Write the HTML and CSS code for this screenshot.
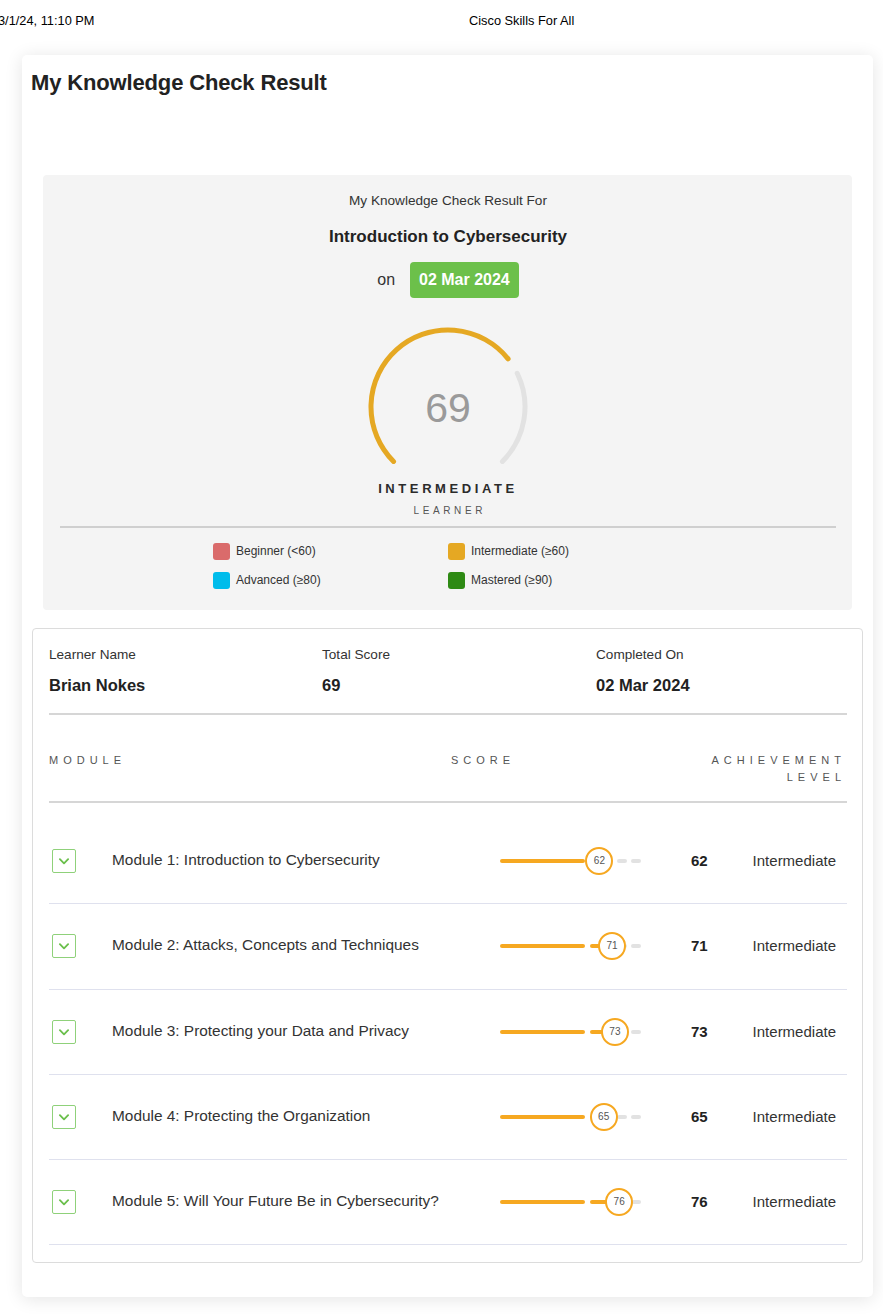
FILE: index.html
```html
<!DOCTYPE html>
<html lang="en">
<head>
<meta charset="utf-8">
<title>Cisco Skills For All</title>
<link rel="stylesheet" href="styles.css">
</head>
<body>
<header class="print-head">
  <span class="print-date">3/1/24, 11:10 PM</span>
  <span class="print-title">Cisco Skills For All</span>
</header>

<main class="card">
  <h1 class="page-title">My Knowledge Check Result</h1>

  <section class="summary">
    <p class="summary-for">My Knowledge Check Result For</p>
    <p class="summary-course">Introduction to Cybersecurity</p>
    <div class="summary-date">
      <span class="on">on</span>
      <span class="date-badge">02 Mar 2024</span>
    </div>
    <svg class="gauge" width="170" height="150" viewBox="0 0 170 150">
      <path d="M154.2 51.24 A77 77 0 0 1 139.45 139.45" fill="none" stroke="#e2e2e2" stroke-width="5" stroke-linecap="round"/>
      <path d="M30.55 139.45 A77 77 0 1 1 145.09 36.86" fill="none" stroke="#e5a823" stroke-width="5" stroke-linecap="round"/>
      <text x="85" y="86" text-anchor="middle" dominant-baseline="central" class="gauge-num">69</text>
    </svg>
    <p class="level">INTERMEDIATE</p>
    <p class="level-sub">LEARNER</p>
    <div class="legend">
      <div class="legend-item"><span class="sw sw-beg"></span>Beginner (&lt;60)</div>
      <div class="legend-item"><span class="sw sw-int"></span>Intermediate (≥60)</div>
      <div class="legend-item"><span class="sw sw-adv"></span>Advanced (≥80)</div>
      <div class="legend-item"><span class="sw sw-mas"></span>Mastered (≥90)</div>
    </div>
  </section>

  <section class="details">
    <div class="info">
      <div class="info-col">
        <div class="info-label">Learner Name</div>
        <div class="info-value">Brian Nokes</div>
      </div>
      <div class="info-col">
        <div class="info-label">Total Score</div>
        <div class="info-value">69</div>
      </div>
      <div class="info-col">
        <div class="info-label">Completed On</div>
        <div class="info-value">02 Mar 2024</div>
      </div>
    </div>

    <div class="thead">
      <span class="th th-module">MODULE</span>
      <span class="th th-score">SCORE</span>
      <span class="th th-level">ACHIEVEMENT LEVEL</span>
    </div>

    <div class="rows">
      <div class="row">
        <span class="chev"><svg width="24" height="24" viewBox="0 0 24 24"><path d="M7.5 10 L12 14.5 L16.5 10" fill="none" stroke="#6abf4b" stroke-width="2" stroke-linecap="round" stroke-linejoin="round"/></svg></span>
        <span class="mod-name">Module 1: Introduction to Cybersecurity</span>
        <span class="bar">
          <span class="seg s1" style="--f:100%"></span><span class="seg s2" style="--f:10%"></span><span class="seg s3" style="--f:0%"></span><span class="seg s4" style="--f:0%"></span>
          <span class="knob" style="left:calc(62% - 2px)">62</span>
        </span>
        <span class="score">62</span>
        <span class="lvl">Intermediate</span>
      </div>
      <div class="row">
        <span class="chev"><svg width="24" height="24" viewBox="0 0 24 24"><path d="M7.5 10 L12 14.5 L16.5 10" fill="none" stroke="#6abf4b" stroke-width="2" stroke-linecap="round" stroke-linejoin="round"/></svg></span>
        <span class="mod-name">Module 2: Attacks, Concepts and Techniques</span>
        <span class="bar">
          <span class="seg s1" style="--f:100%"></span><span class="seg s2" style="--f:55%"></span><span class="seg s3" style="--f:0%"></span><span class="seg s4" style="--f:0%"></span>
          <span class="knob" style="left:calc(71% - 2px)">71</span>
        </span>
        <span class="score">71</span>
        <span class="lvl">Intermediate</span>
      </div>
      <div class="row">
        <span class="chev"><svg width="24" height="24" viewBox="0 0 24 24"><path d="M7.5 10 L12 14.5 L16.5 10" fill="none" stroke="#6abf4b" stroke-width="2" stroke-linecap="round" stroke-linejoin="round"/></svg></span>
        <span class="mod-name">Module 3: Protecting your Data and Privacy</span>
        <span class="bar">
          <span class="seg s1" style="--f:100%"></span><span class="seg s2" style="--f:65%"></span><span class="seg s3" style="--f:0%"></span><span class="seg s4" style="--f:0%"></span>
          <span class="knob" style="left:calc(73% - 2px)">73</span>
        </span>
        <span class="score">73</span>
        <span class="lvl">Intermediate</span>
      </div>
      <div class="row">
        <span class="chev"><svg width="24" height="24" viewBox="0 0 24 24"><path d="M7.5 10 L12 14.5 L16.5 10" fill="none" stroke="#6abf4b" stroke-width="2" stroke-linecap="round" stroke-linejoin="round"/></svg></span>
        <span class="mod-name">Module 4: Protecting the Organization</span>
        <span class="bar">
          <span class="seg s1" style="--f:100%"></span><span class="seg s2" style="--f:25%"></span><span class="seg s3" style="--f:0%"></span><span class="seg s4" style="--f:0%"></span>
          <span class="knob" style="left:calc(65% - 2px)">65</span>
        </span>
        <span class="score">65</span>
        <span class="lvl">Intermediate</span>
      </div>
      <div class="row">
        <span class="chev"><svg width="24" height="24" viewBox="0 0 24 24"><path d="M7.5 10 L12 14.5 L16.5 10" fill="none" stroke="#6abf4b" stroke-width="2" stroke-linecap="round" stroke-linejoin="round"/></svg></span>
        <span class="mod-name">Module 5: Will Your Future Be in Cybersecurity?</span>
        <span class="bar">
          <span class="seg s1" style="--f:100%"></span><span class="seg s2" style="--f:80%"></span><span class="seg s3" style="--f:0%"></span><span class="seg s4" style="--f:0%"></span>
          <span class="knob" style="left:calc(76% - 2px)">76</span>
        </span>
        <span class="score">76</span>
        <span class="lvl">Intermediate</span>
      </div>
    </div>
  </section>
</main>
</body>
</html>
```
FILE: styles.css
```css
* { box-sizing: border-box; }

html, body {
  margin: 0;
  padding: 0;
  background: #ffffff;
}

body {
  font-family: "Liberation Sans", Arial, sans-serif;
  color: #222;
  width: 883px;
  overflow: hidden;
}

p { margin: 0; }

/* print header */
.print-head {
  height: 42px;
  line-height: 42px;
  font-size: 12.8px;
  color: #000;
  display: flex;
}
.print-date {
  margin-left: -2px;
  width: 471px;
}

/* card */
.card {
  margin: 13px 0 20px 22px;
  width: 851px;
  background: #fff;
  border-radius: 5px;
  box-shadow: 0 2px 18px rgba(0, 0, 0, 0.11);
  padding: 14px 10px 34px 10px;
}

.page-title {
  margin: 0 0 0 -1px;
  font-size: 22px;
  line-height: 28px;
  font-weight: 700;
  color: #222;
  letter-spacing: -0.15px;
}

/* summary panel */
.summary {
  margin: 78px 11px 18px 11px;
  background: #f4f4f4;
  border-radius: 4px;
  padding: 16px 16px 20px 17px;
  display: flex;
  flex-direction: column;
  align-items: center;
}
.summary-for {
  font-size: 13.6px;
  line-height: 20px;
  color: #333;
}
.summary-course {
  margin-top: 16px;
  font-size: 17px;
  line-height: 20px;
  font-weight: 700;
  color: #222;
}
.summary-date {
  margin-top: 15px;
  display: flex;
  align-items: center;
  gap: 15px;
}
.on {
  font-size: 16px;
  color: #333;
}
.date-badge {
  background: #6cc04a;
  color: #fff;
  font-weight: 700;
  font-size: 16px;
  height: 36px;
  line-height: 36px;
  padding: 0 9px;
  border-radius: 4px;
}
.gauge {
  display: block;
  margin-top: 24px;
}
.gauge-num {
  font-family: "Liberation Sans", Arial, sans-serif;
  font-size: 41px;
  fill: #9a9a9a;
}
.level {
  margin-top: 8px;
  font-size: 13px;
  line-height: 18px;
  font-weight: 700;
  letter-spacing: 3.6px;
  margin-right: 0;
  color: #2b2b2b;
}
.level-sub {
  margin-top: 5px;
  font-size: 10px;
  line-height: 16px;
  letter-spacing: 3.6px;
  margin-right: -3.6px;
  color: #555;
}
.legend {
  align-self: stretch;
  border-top: 2px solid #cfcfcf;
  margin-top: 7px;
  padding-top: 13px;
  display: grid;
  grid-template-columns: 235px 235px;
  justify-content: center;
  row-gap: 9px;
}
.legend-item {
  display: flex;
  align-items: center;
  gap: 6px;
  font-size: 12px;
  line-height: 20px;
  color: #333;
}
.sw {
  width: 17px;
  height: 17px;
  border-radius: 3px;
  display: inline-block;
}
.sw-beg { background: #da6b6b; }
.sw-int { background: #e5a823; }
.sw-adv { background: #00bceb; }
.sw-mas { background: #2e8a14; }

/* details box */
.details {
  border: 1px solid #dcdcdc;
  border-radius: 4px;
  padding: 17px 15px 17px 16px;
}
.info {
  display: grid;
  grid-template-columns: 273px 274px 1fr;
  padding-bottom: 18px;
  border-bottom: 2px solid #d6d6d6;
}
.info-label {
  font-size: 13.6px;
  line-height: 18px;
  color: #333;
}
.info-value {
  margin-top: 11px;
  font-size: 16.5px;
  line-height: 20px;
  font-weight: 700;
  color: #222;
}

.thead {
  margin-top: 37px;
  padding-bottom: 15px;
  border-bottom: 2px solid #d6d6d6;
  display: grid;
  grid-template-columns: 402px 1fr 140px;
  align-items: start;
}
.th {
  font-size: 11px;
  line-height: 17px;
  letter-spacing: 5px;
  color: #555;
}
.th-level {
  text-align: right;
  margin-right: 1px;
}

.rows {
  padding-top: 16px;
}
.row {
  height: 85.25px;
  border-bottom: 1px solid #dfe1ee;
  display: grid;
  grid-template-columns: 63px 388px 141px 110px 1fr;
  align-items: center;
}
.chev {
  margin-left: 3px;
  width: 24px;
  height: 24px;
  border: 1px solid #8fd17a;
  border-radius: 2px;
  display: flex;
  align-items: center;
  justify-content: center;
}
.chev svg {
  display: block;
  width: 22px;
  height: 22px;
}
.mod-name {
  font-size: 15.4px;
  color: #333;
  margin-top: -2px;
}
.bar {
  position: relative;
  display: flex;
  width: 141px;
  height: 4px;
}
.seg {
  height: 4px;
  border-radius: 2px;
  background: linear-gradient(to right, #f6a821 var(--f), #e2e2e2 var(--f));
}
.s1 { width: 60%; }
.s2 { width: calc(20% - 5px); margin-left: 5px; }
.s3 { width: calc(10% - 4px); margin-left: 4px; }
.s4 { width: calc(10% - 4px); margin-left: 4px; }
.knob {
  position: absolute;
  top: -12px;
  width: 28px;
  height: 28px;
  border-radius: 50%;
  border: 2px solid #f6a821;
  background: #fff;
  font-size: 10px;
  line-height: 24px;
  text-align: center;
  color: #555;
}
.score {
  margin-left: 50px;
  font-size: 15px;
  font-weight: 700;
  color: #222;
  margin-top: -1px;
}
.lvl {
  justify-self: end;
  margin-right: 11px;
  font-size: 15px;
  color: #333;
  margin-top: -1px;
}
```
